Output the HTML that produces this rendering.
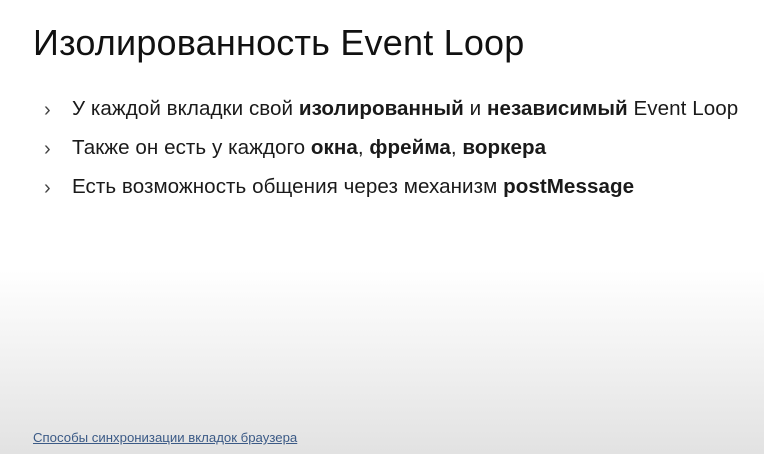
<!DOCTYPE html>
<html><head><meta charset="utf-8"><style>
body{margin:0;width:764px;height:454px;overflow:hidden;font-family:"Liberation Sans",sans-serif;color:#111;
background:linear-gradient(to bottom,#fff 0,#fff 270px,#e2e2e2 454px);position:relative}
h1{position:absolute;left:33px;top:22px;margin:0;font-weight:normal;font-size:36px;letter-spacing:0.2px;white-space:nowrap}
.li{position:absolute;left:72px;font-size:20.6px;white-space:nowrap;letter-spacing:0.05px;color:#1a1a1a}
.li:before{content:"›";position:absolute;left:-28px;top:2px;font-size:20px;color:#444}
a{position:absolute;left:33px;top:430px;font-size:13.2px;color:#3b5a86;text-decoration:underline;white-space:nowrap}
</style></head><body>
<h1>Изолированность Event Loop</h1>
<div class="li" style="top:97px">У каждой вкладки свой <b>изолированный</b> и <b>независимый</b> Event Loop</div>
<div class="li" style="top:136px">Также он есть у каждого <b>окна</b>, <b>фрейма</b>, <b>воркера</b></div>
<div class="li" style="top:175px">Есть возможность общения через механизм <b>postMessage</b></div>
<a>Способы синхронизации вкладок браузера</a>
</body></html>
